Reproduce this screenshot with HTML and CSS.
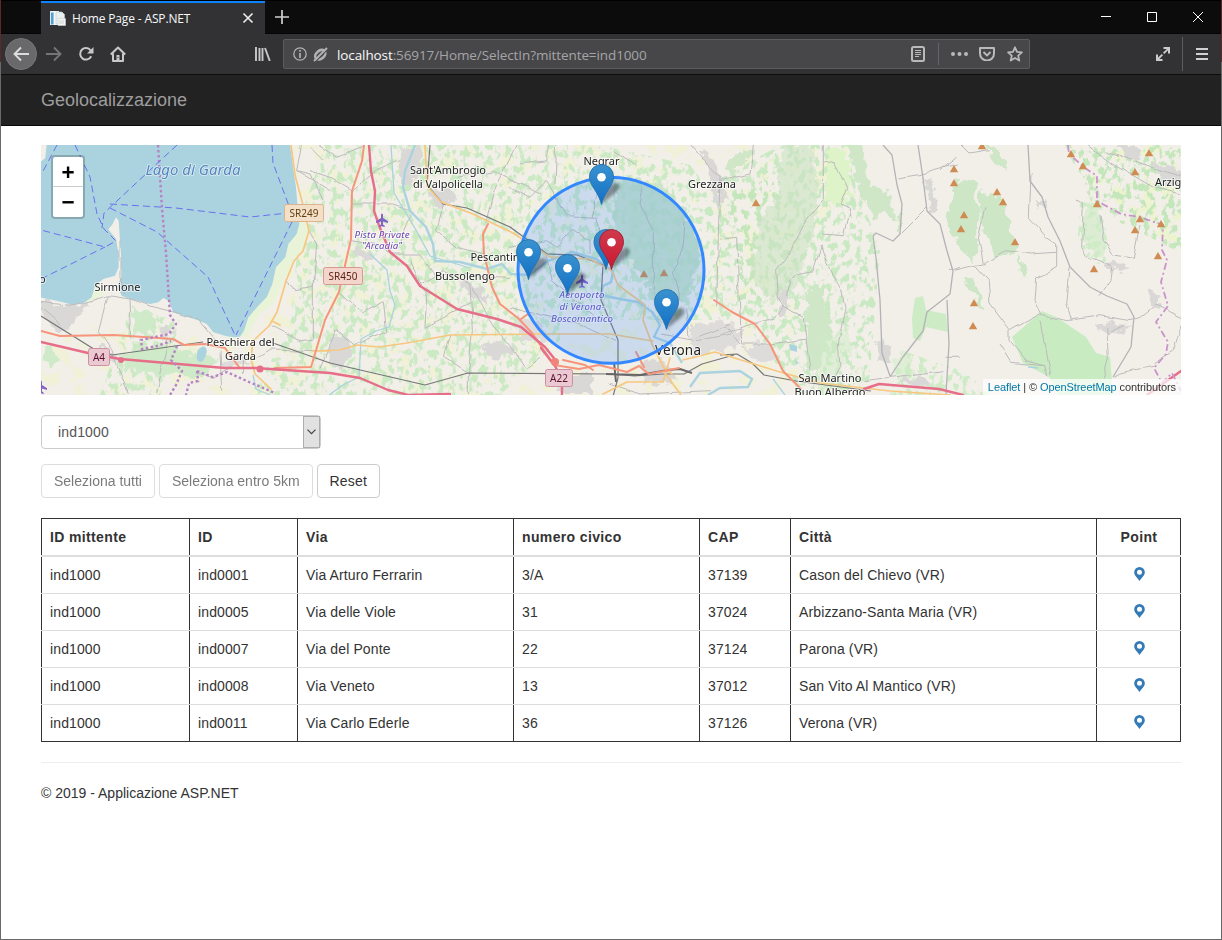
FILE: index.html
```html
<!DOCTYPE html>
<html lang="it">
<head>
<meta charset="utf-8">
<title>Home Page - ASP.NET</title>
<link rel="stylesheet" href="styles.css">
</head>
<body>
<div class="window">
  <header class="titlebar">
    <div class="tab">
      <svg class="favicon" width="17" height="17" viewBox="0 0 17 17"><path d="M1 1h9v14H1z" fill="#f4f6f7"/><path d="M1 1h1v14H1zM4 2h1v12H4z" fill="#dfe9ee"/><path d="M2 2.500h2.500v12H2z" fill="#4f9fd0"/><path d="M7 2h6l2.500 2.500V14H7z" fill="#e9eef0" stroke="#c3ccd1" stroke-width=".6"/><path d="M9 8.500h7.500v7H9z" fill="#f5f5f2" stroke="#c9d0d3" stroke-width=".6"/><path d="M10 11h5M10 13h5" stroke="#c3cacd" stroke-width=".8"/></svg>
      <span class="tab-title">Home Page - ASP.NET</span>
      <svg class="tab-close" width="12" height="12" viewBox="0 0 12 12"><path d="M1.500 1.500l9 9M10.500 1.500l-9 9" stroke="#eee" stroke-width="1.600"/></svg>
    </div>
    <svg class="new-tab" width="14" height="14" viewBox="0 0 14 14"><path d="M7 0v14M0 7h14" stroke="#d0d0d0" stroke-width="1.700"/></svg>
    <div class="window-buttons">
      <svg width="10" height="10" viewBox="0 0 10 10"><path d="M0 4.500h10" stroke="#fff"/></svg>
      <svg width="10" height="10" viewBox="0 0 10 10"><path d="M.5.5h9v9h-9z" fill="none" stroke="#fff"/></svg>
      <svg width="10" height="10" viewBox="0 0 10 10"><path d="M0 0l10 10M10 0L0 10" stroke="#fff"/></svg>
    </div>
  </header>
  <nav class="toolbar">
    <span class="back"><svg width="16" height="16" viewBox="0 0 16 16"><path d="M16 8H1.500M8 1.500L1.500 8 8 14.500" fill="none" stroke="#dcdcdc" stroke-width="1.900"/></svg></span>
    <svg class="forward" width="16" height="16" viewBox="0 0 16 16"><path d="M0 8h14.500M8 1.500L14.500 8 8 14.500" fill="none" stroke="#757577" stroke-width="1.900"/></svg>
    <svg class="reload" width="16" height="16" viewBox="0 0 16 16"><path d="M13.200 10.300a5.800 5.800 0 1 1-.6-6" fill="none" stroke="#c8c8c9" stroke-width="2"/><path d="M15.500 1v6.500H9z" fill="#c8c8c9"/></svg>
    <svg class="home" width="16" height="16" viewBox="0 0 16 16"><path d="M.8 8.500L8 1.500l7.200 7M3 7.500V15h10V7.500" fill="none" stroke="#c8c8c9" stroke-width="2" stroke-linejoin="round"/><path d="M6.500 9h3v6h-3z" fill="#c8c8c9"/><path d="M7.500 11h1v1h-1z" fill="#323234"/></svg>
    <svg class="library" width="16" height="14" viewBox="0 0 16 14"><path d="M1 0v14M4.500 1v13M7.500 1v13M10 1l4.800 13" fill="none" stroke="#c8c8c9" stroke-width="1.900"/></svg>
    <div class="urlbar">
      <svg class="info" width="14" height="14" viewBox="0 0 14 14"><circle cx="7" cy="7" r="6.200" fill="none" stroke="#b1b1b3" stroke-width="1.300"/><path d="M7 3v1.700M7 6v5" stroke="#b1b1b3" stroke-width="1.700"/></svg>
      <svg class="blocked" width="15" height="15" viewBox="0 0 15 15"><ellipse cx="7.300" cy="7.700" rx="5.800" ry="4" transform="rotate(-40 7.300 7.700)" fill="none" stroke="#b1b1b3" stroke-width="2.600"/><path d="M2.500 14.500L14.500 2.500" stroke="#474749" stroke-width="1.200"/><path d="M1 14L14 1" stroke="#b1b1b3" stroke-width="1.900"/></svg>
      <span class="url"><b>localhost</b>:56917/Home/SelectIn?mittente=ind1000</span>
      <svg class="reader" width="14" height="16" viewBox="0 0 14 16"><rect x="1" y="1" width="12" height="14" rx="1.500" fill="none" stroke="#b9b9ba" stroke-width="2"/><path d="M4 4.500h6M4 6.500h6M4 8.500h6M4 10.500h4" stroke="#b9b9ba"/></svg>
      <span class="url-sep"></span>
      <svg class="dots" width="17" height="4" viewBox="0 0 17 4"><g fill="#b9b9ba"><circle cx="2" cy="2" r="2"/><circle cx="8.500" cy="2" r="2"/><circle cx="15" cy="2" r="2"/></g></svg>
      <svg class="pocket" width="16" height="14" viewBox="0 0 16 14"><path d="M1 1h14v5.500a6.500 6.500 0 0 1-14 0z" fill="none" stroke="#b9b9ba" stroke-width="2" stroke-linejoin="round"/><path d="M4.500 5L8 8.500 11.500 5" fill="none" stroke="#b9b9ba" stroke-width="1.900"/></svg>
      <svg class="star" width="16" height="16" viewBox="0 0 16 16"><path d="M8 1.300l2 4.500 4.900.5-3.700 3.300 1.100 5L8 12l-4.300 2.600 1.100-5L1.100 6.300 6 5.800z" fill="none" stroke="#b9b9ba" stroke-width="1.800" stroke-linejoin="round"/></svg>
    </div>
    <svg class="expand" width="14" height="14" viewBox="0 0 14 14"><path d="M2 12L12 2" stroke="#ccc" stroke-width="1.800" stroke-dasharray="6.200 1.700"/><path d="M7.500 1H13v5.500M6.500 13H1V7.500" fill="none" stroke="#ccc" stroke-width="2"/></svg>
    <span class="tool-sep"></span>
    <svg class="menu" width="12" height="12" viewBox="0 0 12 12"><path d="M0 1h12M0 6h12M0 11h12" stroke="#d0d0d0" stroke-width="2"/></svg>
  </nav>

  <div class="navbar"><a class="brand">Geolocalizzazione</a></div>

  <main class="content">
    <div class="map">
      <svg class="map-tiles" width="1140" height="250" viewBox="41 145 1140 250">
        <defs>
          <filter id="mottle" filterUnits="userSpaceOnUse" x="41" y="145" width="1140" height="250" color-interpolation-filters="sRGB">
            <feTurbulence type="fractalNoise" baseFrequency=".16 .12" numOctaves="3" seed="7"/>
            <feColorMatrix values="0 0 0 0 0  0 0 0 0 0  0 0 0 0 0  0 0 0 9 -4.600" result="n"/>
            <feComposite in="SourceGraphic" in2="n" operator="in"/>
          </filter>
          <filter id="mottle2" filterUnits="userSpaceOnUse" x="41" y="145" width="1140" height="250" color-interpolation-filters="sRGB">
            <feTurbulence type="fractalNoise" baseFrequency=".07" numOctaves="3" seed="31"/>
            <feColorMatrix values="0 0 0 0 0  0 0 0 0 0  0 0 0 0 0  0 0 0 12 -6.700" result="n"/>
            <feComposite in="SourceGraphic" in2="n" operator="in"/>
          </filter>
          <filter id="rough" filterUnits="userSpaceOnUse" x="41" y="145" width="1140" height="250">
            <feTurbulence type="fractalNoise" baseFrequency=".11" numOctaves="3" seed="4"/>
            <feDisplacementMap in="SourceGraphic" scale="14" xChannelSelector="R" yChannelSelector="G"/>
          </filter>
          <filter id="wiggle" filterUnits="userSpaceOnUse" x="41" y="145" width="1140" height="250" color-interpolation-filters="sRGB">
            <feTurbulence type="fractalNoise" baseFrequency=".05" numOctaves="2" seed="9"/>
            <feDisplacementMap in="SourceGraphic" scale="6" xChannelSelector="R" yChannelSelector="G"/>
          </filter>
          <filter id="soft" x="-50%" y="-50%" width="200%" height="200%"><feGaussianBlur stdDeviation="1.800"/></filter>
          <linearGradient id="pin-blue" x1="0" y1="0" x2="0" y2="1"><stop offset="0" stop-color="#3a92cf"/><stop offset="1" stop-color="#126fc6"/></linearGradient>
          <linearGradient id="pin-red" x1="0" y1="0" x2="0" y2="1"><stop offset="0" stop-color="#cf3a4d"/><stop offset="1" stop-color="#cb1830"/></linearGradient>
          <path id="pin-shadow" d="M0 0L4 -14Q9 -22 16 -21Q21 -18 15 -12Z" fill="#000" opacity=".36" filter="url(#soft)"/>
          <path id="pin" d="M0-.5C-2-9-7.500-16-10-20.500-11.300-23-12-25.500-12-28.500a12 12 0 0 1 24 0c0 3-.7 5.500-2 8C7.500-16 2-9 0-.5z"/>
          <path id="peak" d="M0-4l4.200 7.300h-8.400z"/>
          <path id="plane" d="M0-6.500c.8 0 1 1 1 2v2.500l5 3.300V3L1 1.500V4.500l1.700 1.300V7L0 6.200-2.700 7V5.800L-1 4.500v-3L-6 3V1.300L-1-2v-2.500c0-1 .2-2 1-2z"/>
        </defs>
        <rect x="41" y="145" width="1140" height="250" fill="#f2efe9"/>

        <!-- farmland, woods and scrub -->
        <g filter="url(#mottle2)">
          <path fill="#f0f1d6" d="M290 145H555V395H41V335L140 320 225 345 285 245ZM545 145H700L850 145 830 210 790 270 800 395H545Z"/>
          <path fill="#eef3cf" d="M1080 145H1181V250L1100 205Z"/>
        </g>
        <g filter="url(#mottle)">
          <path fill="#cbeac4" d="M325 145H530L560 190 560 340 500 395H250L290 330 300 220ZM130 310L180 320 160 395H100ZM545 145H600L690 165 740 230 735 320H545Z"/>
          <path fill="#c9e9c2" d="M700 190L780 145H860L862 200 880 250 868 395H800L735 310Z"/>
          <path fill="#c9e7bd" d="M1065 145H1181V253L1095 210Z"/>
          <path fill="#cdebc5" d="M900 350L960 370 1000 395H890ZM1080 200l20 10 12 50-22 6-12-30z"/>
          <path fill="#c3e6bb" d="M1070 145H1181V250L1100 210ZM720 200L780 170 800 250 780 300 740 300Z"/>
        </g>
        <g filter="url(#rough)">
          <path fill="#cce3c3" d="M783 145h28l8 40-6 45-16 55-25 18-22-28 8-50 18-30z" opacity=".6"/>
          <path fill="#dff3c8" d="M828 150l18 2 5 45-18 12-8-10z"/>
          <path fill="#cfe6c7" d="M850 145h12l8 40 20 8 6 28-14-8-8 6-14-24zM727 160l24-14 5 8-26 20zM806 290l16-4 8 50-12 35-10-10zM985 146h10l14 22-10-2z"/>
          <path fill="#cde7c6" d="M953 182l20-2 6 30-6 55-12-16-14-24zM980 190l22 10 16 48-20 12-18-42zM965 280l8-3 14 35-8-4zM1015 254l14 16-6 6zM898 210l4-1v24l-5-8z"/>
          <path fill="#cdebc5" d="M1085 203l16 4 6 36-6 15-20-18z" opacity=".6"/>
          <path fill="#cdebc5" d="M820 340l24-12 8 20-16 34-16 12zM893 360l12-10 8 20-14 14z" opacity=".5"/>
          <path fill="#cfeac8" d="M120 355l40-12 30 10 28 4-12 20-82-6zM42 348l10-2 8 16-10 4zM132 308l22 6-4 22-18-3z"/>
          <path fill="#bfe0bf" opacity=".75" d="M625 178l40 8 30 40 6 30-14 44-36 2-8-30-20-20-12-40z"/>
        </g>
        <path fill="#cdebc5" d="M915 298l8-2 3 14 20 4 2 18-22-5-6 14-7-3-1-20z"/>
        <path fill="#c8ebc2" d="M1012 337l30-26 14 6 30 20 10 16 14 4 3 38h-54l-10-18-26-14z"/>
        <!-- built-up areas -->
        <g fill="#d9d8d7" filter="url(#rough)">
          <path d="M41 299l22 6 28-2-10 12-20 20-20-20zM403 145h20l-5 34-12 10-8-20zM428 192l20-4 8 12-18 8zM330 340l14-6 8 18-12 18-10-10zM480 345l22-4 14 10-24 10zM460 280l22 8 6 14-20-6zM358 250l14 2-4 10-14-8zM568 374h25v20h-35zM640 362l24-2 14 20-34 4zM704 150l10 10 12 38-8 12-6-30-12-30zM925 178l6 2 8 28-8 4zM1037 200h9v9h-9zM1102 262l30 3-8 6-18-2zM1095 323l36 2-4 8-30-4zM1146 290l14 6-2 12-10-8zM1150 160l31 10v18l-18-6zM1115 145h18l8 16-12-2zM877 343l12 2 4 18-12-3zM902 378h26v6h-28zM780 290l5 4v22h-5zM100 345l18 8-6 12-12-10zM164 325l8 4-4 12-8-2z"/>
          <path fill="#dedcda" d="M690 325l30-6 20 14-4 16-44 8zM744 346l24-4 10 16-20 4zM515 315l26 8 10 20-26-3zM220 362l22-6 8 8-24 6z"/>
        </g>
        <!-- lake and ponds -->
        <g transform="translate(40 144) scale(.33333)">
          <path fill="#e9f3d8" d="M778 200L805 250 795 310 765 340 735 400 700 480 660 510 620 575 560 585 600 540 700 350ZM130 478L170 420 200 440 170 465Z"/>
          <path fill="#aad3df" d="M0 0H750L758 60 768 130 774 200 778 240 770 270 745 300 736 340 708 370 697 420 680 460 655 485 625 520 612 560 600 578 585 580 560 577 520 565 500 540 470 527 440 518 400 505 386 470 370 462 355 475 330 480 300 472 270 465 245 455 232 425 244 400 243 330 240 290 236 230 228 220 218 240 205 256 228 285 236 330 236 370 225 395 190 405 165 425 155 460 130 478 100 482 50 470 0 460Z"/>
          <path fill="#f2efe9" d="M0 0H20L16 42 0 55Z"/>
          <path fill="#aad3df" d="M472 620q18-20 26-8t-10 40q-16 6-18-12z"/>
        </g>
        <path fill="#aad3df" d="M789 344l8 2v6l-7-2zM795 360l4 3-3 1z"/>

        <!-- minor roads -->
        <g fill="none" stroke="#bbb" stroke-width="3" filter="url(#wiggle)">
          <g transform="translate(40 144) scale(.33333)">
            <path d="M0 475L100 485 205 455 270 465 380 500 475 525 530 590M205 455L175 560 215 620 265 750M270 465L275 580M240 290V400L250 450M385 580L350 750M540 620L545 740M785 0L770 80 810 90 850 170M770 80L870 140M805 260L830 300 820 430 770 440 735 410M695 545L780 590 820 585 820 400M650 640L690 615 820 620M0 490L60 540M570 670L520 700 470 690M615 640L610 690"/>
          </g>
          <g transform="translate(310 144) scale(.33333)">
            <path d="M0 80L60 100 125 140 200 80 270 50M20 0L80 40 160 10M122 290L190 300 245 330 330 330 370 390 600 400M245 180L310 200 270 300M330 420L400 380 480 420 487 560 475 690M487 430L560 560 650 670 690 640M88 445L160 510 220 475 230 560 130 603M345 550L350 460 300 350M345 550L480 480M400 180L380 260 440 310 520 330M440 100L550 80 690 150M620 0L560 120 530 240M0 10L40 50M30 670L80 560 130 603M475 690V750M420 573L400 640 475 687M122 180H245"/>
          </g>
          <g transform="translate(510 144) scale(.33333)">
            <path d="M0 130L60 160 110 110 170 215 260 220 280 300M140 0L135 120M250 220L250 170 270 130M400 130L390 180 430 270 430 440 450 500M525 230L520 300 490 390 510 470M540 0L600 70 630 100 625 270 620 490M0 310L110 290 140 310 190 255 240 290 240 330M0 490L200 540 320 590M100 310L130 410 270 530M30 60L110 50 120 0M450 570L560 590 660 570M530 490L540 580M300 720L390 750 600 740M310 20L380 60M560 580L660 540M400 480L480 560"/>
          </g>
          <g transform="translate(720 144) scale(.33333)">
            <path d="M310 0L310 170 260 230 200 340 170 380 175 460 190 490 250 520 270 680M190 490L165 520 0 570M200 460L205 410 230 390 280 380 305 300M310 270L370 275 390 195 360 180 380 130 345 60 310 50M300 300L320 360 365 440 375 490 355 600 360 670 345 700M535 105L600 95 640 80 710 60M540 270L620 190M670 680L510 700M0 285L50 280 55 410 65 600M65 600H150L260 585M100 0L90 90 0 110M430 710L510 700M690 380L720 370M20 550L60 600"/>
          </g>
          <g transform="translate(940 144) scale(.33333)">
            <path d="M40 380L100 365 130 360 160 340 200 320 270 330 350 325M130 360L115 280 135 190M105 365L145 410 150 480 210 560 210 590 260 650 310 665 320 700M210 560L300 510 380 530 480 515 570 530 600 520 650 480 725 525M480 455L510 410 515 370 480 350 440 340 425 310 430 180 405 165M270 90L265 220 320 280 350 300 350 370 290 405 285 470 305 510M390 370L380 480 395 530M500 20L630 70 720 95M440 0L520 60 640 130 720 150M300 530L330 700M480 210L490 290 520 330 580 340 600 240M50 40L0 80M60 0L90 30 150 20M180 600L215 655 310 665M500 550L505 640 490 700M640 670L540 690 520 700M725 540L700 620 640 660M20 640H60M560 540L500 575"/>
          </g>
        </g>
        <g fill="none" stroke="#b3b3b6" stroke-width="1.300" stroke-linejoin="round"><path d="M1028 145l2 36 12 16 6 20 12 24 10 26 20 20 17 9 20 8 7 13-3 30-18 30M883 145l9 10 5 30 5 19-2 30-7 7-17-8-3 3 3 22 4 42 2 53 8 23M918 145l5 33 4 33 13 13 7 27 6 20-3 23-23 18-4 19-20 26-13 20M947 300l2 44-3 50"/></g>

        <!-- rivers -->
        <g fill="none" stroke="#aad3df" stroke-width="2.400" stroke-linejoin="round">
          <path d="M415 145l-10 26-2 16 7 24 16 16 7 17 2 17 25 1 27 7 15-5 9 10 18 1 19-14 24-9 24 7 17 12-2 11-8 4-2 9 19 4 18 3 14 10 8 13-6 12 16 6 12 20M690 387l10-14 20-1 20-1 12 8-4 8-28 1-12 7"/>
          <path stroke-width="1.300" d="M391 145l3 48 22 37 14 26 40 12M370 254l17 16 3 21 5 14-6 22-13 4-15 8-2 38-16 8-14 10M253 375l3 14 14 6M773 379l12 16M1028 367l10 1"/>
        </g>
        <!-- railways -->
        <g fill="none" stroke="#777" stroke-width="1.200" stroke-linejoin="round">
          <path d="M41 316l56 35 15 4 91-13M273 343l57 20 95 22 43-12 144 1 22 2 30-2 20 0 18-10 32-9M430 145l-3 40 16 19 24 4 43 19 37 27 30 1 26 10-2 35 17 40 0 38-6 22M720 355l17-1 15 9 12 12 32 6 75 10"/>
          <path stroke="#666" stroke-width="2" d="M606 374l34 1 28-5 12-1 12 4M614 362l2 20"/>
        </g>
        <!-- main roads -->
        <g fill="none" stroke-linejoin="round" stroke-linecap="round">
          <path stroke="#f7c780" stroke-width="1.700" d="M291 145l4 30 8 30 6 26-6 20-9 10-8 20-9 31-8 14-16 15-2 18 4 15 16 15M313 351l27-1 17-5 22 2 28-4 43-8 97-1 63 0 43 7M425 145l2 41 14 16 32 12 40 19 37 24 40 2 22 12 6 14 27 20-2 15 9 24 12 24 8 6M603 394l24-12h36l7-24M683 360l32-8 65 20 40 11 70 8 60 4M280 325l-8-4M317 351h13M665 373l16 22"/>
          <path stroke="#f6957c" stroke-width="2" d="M364 145l-2 16-10 30-1 48-12 53-14 28-13 44-1 3-36 1M41 331l19 5 54-1 59 4 11 6 21-1 20 4 14 19M488 224l-5 10 1 20 8 33 8 17 18 14 14 15 22 32 25 4 20-4 28 7 12-6 10 8 30-6M636 352l8 15M714 300l18 12 23 12 15 20 13 27 18 18M528 314l-7 5M510 312l8 6M563 360l22 5 8 5"/>
          <path stroke="#e66e88" stroke-width="2.400" d="M41 342l47 11 32 6 105 9h30l75 5 30 5 28 12 20 5 42-1M369 145l2 26 4 20-1 20 6 17 10 24 17 14 13 20 37 23 40 10 24 8 24 20 12 15M541 348l14 18 7 13 0 16M864 389l15-5 60 5 24 6M1147 395l34-24"/>
          <g fill="#e66e88"><circle cx="260" cy="369" r="3.500"/><circle cx="121" cy="360" r="3"/><circle cx="555" cy="362" r="4" fill="#f08478"/></g>
        </g>
        <!-- boundaries and ferry lines -->
        <g fill="none" stroke="#b683c5">
          <path stroke-width="2.400" stroke-dasharray="2.500 2.500" d="M158 145l4 63 4 45 3 47 1 15 6 9-7 10-28 6 1 9 15-3 14-5M177 346l-6 14 11 11-6 14-6 10M197 371l1 10-9 2-3 12M197 371l16 6 14-5 22 10 26 11"/>
          <path stroke="#cb93cc" stroke-width="1.800" stroke-dasharray="7 3 2 3" d="M1068 145l1 9 16 14 12 8v25l24 13 18 3 24 8-1 25 5 10-6 22 7 24-12 16 12 20-2 12-12 14 8 15 10-10 9 18"/>
        </g>
        <g fill="none" stroke="#6b70ef" stroke-width="1" stroke-dasharray="7 4">
          <path d="M75 145l15 32 7 37 7 15 12 12-11 6-64-17M41 279l64-32M177 145l-73 68-2 15M110 204l66 4 74 9 38-4M110 208l47 24 51 45 27 58M272 145l1 18 16 43M292 222l-56 113M57 145l-15 28"/>
        </g>

        <g fill="#cf8b51">
          <use href="#peak" x="982" y="146"/><use href="#peak" x="954" y="169"/><use href="#peak" x="954" y="183"/><use href="#peak" x="997" y="192"/><use href="#peak" x="1003" y="202"/><use href="#peak" x="964" y="215"/><use href="#peak" x="961" y="229"/><use href="#peak" x="1015" y="242"/><use href="#peak" x="974" y="303"/><use href="#peak" x="973" y="326"/><use href="#peak" x="1071" y="154"/><use href="#peak" x="1083" y="166"/><use href="#peak" x="1149" y="153"/><use href="#peak" x="1135" y="172"/><use href="#peak" x="1097" y="204"/><use href="#peak" x="1140" y="219"/><use href="#peak" x="1161" y="224"/><use href="#peak" x="1135" y="230"/><use href="#peak" x="1158" y="256"/><use href="#peak" x="1094" y="269"/><use href="#peak" x="756" y="203"/><use href="#peak" x="644" y="274"/><use href="#peak" x="664" y="273"/>
        </g>
        <g fill="#8461c4"><use href="#plane" x="382" y="220"/><use href="#plane" x="582" y="281"/><use href="#plane" x="41" y="387"/></g>

        <g class="shields">
          <g fill="#f4e0c8" stroke="#d9b48c"><rect x="284.500" y="204.500" width="39" height="17" rx="2"/></g>
          <g fill="#f4d5cb" stroke="#d59a8c"><rect x="323.500" y="267.500" width="39" height="17" rx="2"/></g>
          <g fill="#ebc9d2" stroke="#cf8fa3"><rect x="88.500" y="348.500" width="21" height="17" rx="2"/><rect x="545.500" y="369.500" width="27" height="17" rx="2"/></g>
          <text x="304" y="217" textLength="29" fill="#5f3f12">SR249</text>
          <text x="343" y="280" textLength="29" fill="#5d1f14">SR450</text>
          <text x="99" y="361" textLength="12" fill="#5c1030">A4</text>
          <text x="559" y="382" textLength="18" fill="#5c1030">A22</text>
        </g>
        <g class="places">
          <text class="lake-name" x="193" y="175" textLength="95">Lago di Garda</text>
          <text x="117.500" y="291" textLength="46">Sirmione</text>
          <text x="240.500" y="346" textLength="68">Peschiera del</text>
          <text x="240.500" y="360" textLength="31">Garda</text>
          <text x="448" y="173.500" textLength="76">Sant'Ambrogio</text>
          <text x="448" y="187.500" textLength="70">di Valpolicella</text>
          <text x="498" y="261" textLength="55">Pescantina</text>
          <text x="465" y="280" textLength="60">Bussolengo</text>
          <text x="601.500" y="164.500" textLength="36">Negrar</text>
          <text x="712" y="188" textLength="48">Grezzana</text>
          <text x="678" y="355" textLength="46" class="city">Verona</text>
          <text x="830" y="382" textLength="63">San Martino</text>
          <text x="830" y="396" textLength="71">Buon Albergo</text>
          <text class="cut" x="1155" y="186">Arzig</text>
          <text class="cut" x="39" y="283">o</text>
          <g class="airfield"><text x="382" y="237.500" textLength="55">Pista Private</text><text x="382" y="249" textLength="40">"Arcadia"</text>
          <text x="582" y="298" textLength="45">Aeroporto</text><text x="582" y="310" textLength="45">di Verona-</text><text x="582" y="322" textLength="62">Boscomantico</text></g>
        </g>

        <circle cx="611" cy="270.300" r="93" fill="#38f" fill-opacity=".2" stroke="#38f" stroke-width="3"/>
        <g>
          <use href="#pin-shadow" x="601.500" y="204"/><use href="#pin-shadow" x="528.500" y="279"/><use href="#pin-shadow" x="567.500" y="294"/><use href="#pin-shadow" x="611.500" y="269"/><use href="#pin-shadow" x="666.500" y="329"/>
        </g>
        <g fill="url(#pin-blue)" stroke="#2671ad" stroke-width=".9">
          <use href="#pin" x="601.500" y="205"/><use href="#pin" x="528.500" y="280"/><use href="#pin" x="606" y="270"/><use href="#pin" x="567.500" y="295"/><use href="#pin" x="666.500" y="330"/>
          <use href="#pin" x="611.500" y="270" fill="url(#pin-red)" stroke="#9c2036"/>
        </g>
        <g fill="#fff"><circle cx="601.500" cy="177.300" r="4.300"/><circle cx="528.500" cy="252.300" r="4.300"/><circle cx="567.500" cy="268.300" r="4.300"/><circle cx="611.500" cy="242.300" r="4.300"/><circle cx="666.500" cy="302.300" r="4.300"/></g>
      </svg>
      <div class="zoom"><span>+</span><span>−</span></div>
      <div class="attribution"><a>Leaflet</a> | © <a>OpenStreetMap</a> contributors</div>
    </div>

    <div class="select"><span>ind1000</span><i><svg width="9" height="6" viewBox="0 0 9 6"><path d="M.5.7l4 4 4-4" fill="none" stroke="#444" stroke-width="1.200"/></svg></i></div>
    <div class="buttons"><button class="btn" disabled>Seleziona tutti</button><button class="btn" disabled>Seleziona entro 5km</button><button class="btn reset">Reset</button></div>

    <svg class="symbols" width="0" height="0"><symbol id="marker" viewBox="0 0 11 14"><path fill-rule="evenodd" d="M5.500 0A5.300 5.300 0 0 1 10.800 5.300C10.800 8.500 7.800 10.500 5.500 14 3.200 10.500.2 8.500.2 5.300A5.300 5.300 0 0 1 5.500 0zM5.500 2.700a2.500 2.500 0 1 0 0 5 2.500 2.500 0 0 0 0-5z" fill="#337ab7"/></symbol></svg>
    <table class="grid">
      <thead><tr><th>ID mittente</th><th>ID</th><th>Via</th><th>numero civico</th><th>CAP</th><th>Città</th><th>Point</th></tr></thead>
      <tbody>
        <tr><td>ind1000</td><td>ind0001</td><td>Via Arturo Ferrarin</td><td>3/A</td><td>37139</td><td>Cason del Chievo (VR)</td><td><svg><use href="#marker"/></svg></td></tr>
        <tr><td>ind1000</td><td>ind0005</td><td>Via delle Viole</td><td>31</td><td>37024</td><td>Arbizzano-Santa Maria (VR)</td><td><svg><use href="#marker"/></svg></td></tr>
        <tr><td>ind1000</td><td>ind0007</td><td>Via del Ponte</td><td>22</td><td>37124</td><td>Parona (VR)</td><td><svg><use href="#marker"/></svg></td></tr>
        <tr><td>ind1000</td><td>ind0008</td><td>Via Veneto</td><td>13</td><td>37012</td><td>San Vito Al Mantico (VR)</td><td><svg><use href="#marker"/></svg></td></tr>
        <tr><td>ind1000</td><td>ind0011</td><td>Via Carlo Ederle</td><td>36</td><td>37126</td><td>Verona (VR)</td><td><svg><use href="#marker"/></svg></td></tr>
      </tbody>
    </table>
    <footer class="footer">© 2019 - Applicazione ASP.NET</footer>
  </main>
</div>
</body>
</html>
```
FILE: styles.css
```css
* { box-sizing: border-box; }
body { margin: 0; background: #fff; color: #333; font: 14px/20px "Liberation Sans", Arial, sans-serif; }
svg { display: block; flex: none; }

.window { height: 940px; border: solid #69696a; border-width: 0 1px 1px; border-image: linear-gradient(#5a2a25 63px, #69696a 63px) 1; overflow: hidden; display: flex; flex-direction: column; }

/* Browser chrome */
.titlebar { height: 34px; flex: none; background: #0c0c0c; border-top: 1px solid #000; border-bottom: 1px solid #050506; display: flex; align-items: center; padding-left: 40px; }
.tab { width: 224px; height: 34px; align-self: flex-start; background: #323234; border-top: 2px solid #0a84ff; display: flex; align-items: center; padding: 0 11px 2px 8px; }
.tab-title { flex: 1; margin-left: 6px; color: #f9f9fa; font: 12px/16px "Open Sans", "Noto Sans", sans-serif; letter-spacing: -0.15px; white-space: nowrap; padding-top: 1px; }
.new-tab { margin-left: 10px; }
.window-buttons { margin-left: auto; display: flex; gap: 36px; padding-right: 18px; }

.toolbar { height: 41px; flex: none; background: #323234; border-bottom: 1px solid #0c0c0d; display: flex; align-items: center; padding: 0 13px 0 4px; }
.back { width: 32px; height: 32px; border-radius: 50%; background: #69696b; border: 1px solid #777779; display: flex; align-items: center; justify-content: center; }
.forward { margin-left: 9px; }
.reload { margin-left: 16px; }
.home { margin-left: 16px; }
.library { margin-left: 129px; }
.urlbar { width: 747px; height: 30px; margin-left: 12px; padding: 0 6px 0 9px; background: #474749; border: 1px solid #5c5c5e; border-radius: 2px; display: flex; align-items: center; }
.blocked { margin-left: 6px; }
.url { flex: 1; margin-left: 9px; padding-top: 1px; color: #a5a5a7; font: 13.5px/20px "Open Sans", "Noto Sans", sans-serif; letter-spacing: -0.1px; white-space: nowrap; }
.url b { font-weight: 400; color: #f9f9fa; }
.url-sep { width: 1px; height: 22px; background: #5f6670; margin: 0 12px 0 13px; }
.pocket { margin-left: 11px; }
.star { margin-left: 12px; }
.expand { margin-left: auto; }
.tool-sep { width: 1px; height: 34px; background: #5c5c5e; margin: 0 13px 0 12px; }

/* Page */
.navbar { height: 51px; flex: none; background: #222; border-bottom: 1px solid #080808; padding: 15px 40px; }
.brand { color: #9d9d9d; font-size: 18px; line-height: 20px; display: block; }
.content { padding: 19px 40px 0; }

.map { position: relative; height: 250px; }
.zoom { position: absolute; left: 10px; top: 10px; width: 34px; border: 2px solid rgba(0, 0, 0, .2); border-radius: 4px; background: #fff; background-clip: padding-box; color: #000; font: bold 21px/30px "DejaVu Sans Mono", "Liberation Mono", monospace; text-align: center; }
.zoom span { display: block; height: 30px; }
.zoom span:first-child { border-bottom: 1px solid #ccc; }
.attribution { position: absolute; right: 0; bottom: 0; padding: 0 5px; background: rgba(255, 255, 255, .7); font-size: 11px; line-height: 16px; letter-spacing: -0.085px; white-space: nowrap; }
.attribution a { color: #0078a8; }

.shields text { font: 10px "Noto Sans", sans-serif; text-anchor: middle; }
.places text { font: 11px "Noto Sans", sans-serif; text-anchor: middle; fill: #222; stroke: rgba(255, 255, 255, .6); stroke-width: 2.2px; stroke-linejoin: round; paint-order: stroke; }
.places text.cut { text-anchor: start; }
.places text.city { font-size: 13.5px; }
.places text.lake-name { font: italic 15px "Noto Sans", sans-serif; fill: #5585bf; stroke-width: 1.6px; }
.places .airfield text { font: italic 9.7px "Noto Sans", sans-serif; fill: #6b45b5; }

.select { width: 280px; height: 34px; margin-top: 20px; border: 1px solid #ccc; border-radius: 4px; color: #555; display: flex; align-items: center; justify-content: space-between; padding-left: 16px; letter-spacing: .15px; box-shadow: inset 0 1px 1px rgba(0, 0, 0, .04); }
.select i { width: 17px; height: 32px; background: #e1e1e1; border: 1px solid #adadad; display: flex; align-items: center; justify-content: center; }
.buttons { display: flex; gap: 4px; margin-top: 15px; }
.btn { height: 34px; padding: 0 12px; border: 1px solid #ccc; border-radius: 4px; background: #fff; color: #333; font: inherit; white-space: nowrap; }
.btn:disabled { opacity: .65; }
.reset { letter-spacing: .15px; }

.symbols { position: absolute; }
.grid { display: block; margin-top: 20px; border-top: 1px solid #333; }
.grid thead, .grid tbody { display: block; }
.grid tr { display: grid; grid-template-columns: 148px 108px 216px 186px 91px 306px 85px; border-bottom: 1px solid #ddd; }
.grid thead tr { border-bottom-width: 2px; }
.grid tbody tr:last-child { border-bottom-color: #333; }
.grid th, .grid td { height: 36px; padding: 8px; border-left: 1px solid #333; text-align: left; white-space: nowrap; letter-spacing: .12px; }
.grid th { letter-spacing: .36px; }
.grid th:last-child, .grid td:last-child { border-right: 1px solid #333; text-align: center; padding-right: 7px; }
.grid td svg { width: 11px; height: 14px; margin: 2px auto 0; }
.footer { margin-top: 20px; border-top: 1px solid #eee; padding-top: 20px; }
```
